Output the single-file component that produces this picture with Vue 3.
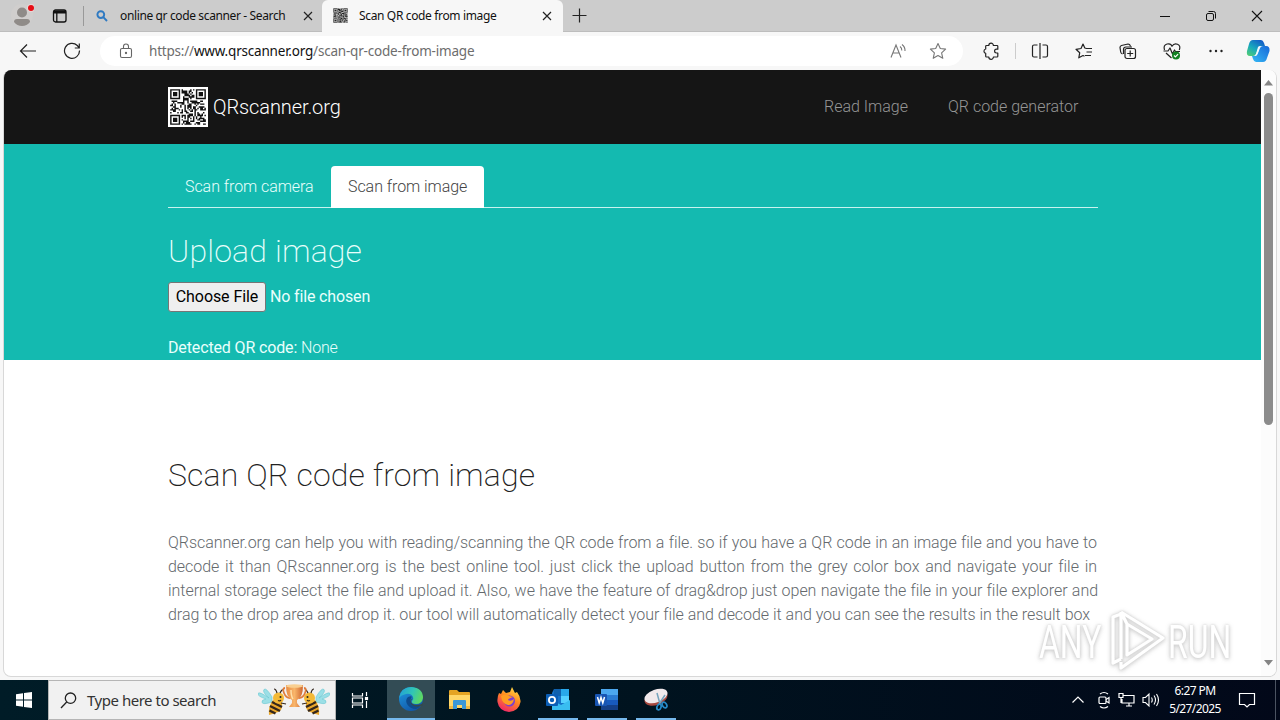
<script setup>
const N = 25
const finder = (x, y) => {
  const d = Math.max(Math.abs(x - 3), Math.abs(y - 3))
  return d === 3 || d <= 1
}
const cells = []
let seed = 91
for (let y = 0; y < N; y++) {
  for (let x = 0; x < N; x++) {
    seed = (seed * 1103515245 + 12345) % 2147483648
    let on = ((seed >> 12) & 7) > 3
    if (x < 8 && y < 8) on = x < 7 && y < 7 && finder(x, y)
    else if (x > 16 && y < 8) on = x > 17 && y < 7 && finder(x - 18, y)
    else if (x < 8 && y > 16) on = x < 7 && y > 17 && finder(x, y - 18)
    if (on) cells.push(`M${x} ${y}h1v1h-1z`)
  }
}
const qrPath = cells.join('')

const lines = [
  'QRscanner.org can help you with reading/scanning the QR code from a file. so if you have a QR code in an image file and you have to',
  'decode it than QRscanner.org is the best online tool. just click the upload button from the grey color box and navigate your file in',
  'internal storage select the file and upload it. Also, we have the feature of drag&drop just open navigate the file in your file explorer and',
  'drag to the drop area and drop it. our tool will automatically detect your file and decode it and you can see the results in the result box'
]
</script>

<template>
  <div class="screen">
    <header class="tabbar">
      <svg class="avatar" width="24" height="28" viewBox="0 0 24 28">
        <circle cx="12" cy="15" r="11" fill="#d0cecd" />
        <circle cx="12" cy="12.500" r="5" fill="#8f8b88" />
        <path d="M4 22q0-3 3-3h10q3 0 3 3-3 4-8 4t-8-4z" fill="#8f8b88" />
        <circle cx="21" cy="8" r="4" fill="#e8d8d6" />
        <circle cx="21" cy="8" r="3" fill="#e60d15" />
      </svg>
      <svg class="workspaces" width="16" height="16" viewBox="0 0 16 16" fill="none" stroke="#111" stroke-width="1.300">
        <rect x="1.500" y="2" width="12.500" height="12" rx="2" />
        <path d="M1.500 4h12.500" stroke-width="3" />
        <path d="M4.800 5v9" />
      </svg>
      <i class="sep"></i>
      <div class="tab idle">
        <svg width="12" height="12" viewBox="0 0 12 12" fill="none" stroke="#2f7ac2" stroke-width="1.900">
          <circle cx="4.800" cy="4.600" r="3.400" />
          <path d="M7.300 7.200L11 11" />
        </svg>
        <span class="tab-text t1">online qr code scanner - Search</span>
        <svg class="x" width="10" height="10" viewBox="0 0 10 10" stroke="#222" stroke-width="1.200"><path d="M1 1l8 8M9 1L1 9" /></svg>
      </div>
      <div class="tab active">
        <svg width="15" height="15" viewBox="-1 -1 27 27"><rect x="-1" y="-1" width="27" height="27" fill="#bbb" /><path :d="qrPath" fill="#222" /></svg>
        <span class="tab-text t2">Scan QR code from image</span>
        <svg class="x" width="10" height="10" viewBox="0 0 10 10" stroke="#222" stroke-width="1.200"><path d="M1 1l8 8M9 1L1 9" /></svg>
      </div>
      <svg class="plus" width="15" height="15" viewBox="0 0 15 15" stroke="#222" stroke-width="1.200"><path d="M7.500 .5v14M.5 7.500h14" /></svg>
      <div class="win">
        <svg width="12" height="12" viewBox="0 0 12 12" stroke="#111"><path d="M1 6.500h10" /></svg>
        <svg width="12" height="12" viewBox="0 0 12 12" stroke="#111" fill="none"><rect x="1.500" y="3.500" width="7" height="7" rx="1.500" /><path d="M3.500 1.500h5q2 0 2 2v5" /></svg>
        <svg width="12" height="12" viewBox="0 0 12 12" stroke="#111" stroke-width="1.100"><path d="M1 1l10 10M11 1L1 11" /></svg>
      </div>
    </header>

    <div class="toolbar">
      <svg class="back" width="18" height="16" viewBox="0 0 18 16" fill="none" stroke="#222" stroke-width="1.200"><path d="M17 8H1.500M8 1.500L1.500 8 8 14.500" /></svg>
      <svg class="reload" width="18" height="18" viewBox="0 0 18 18" fill="none" stroke="#222" stroke-width="1.200"><path d="M16.500 8.500A7.500 7.500 0 1 1 14.300 3.500L16 5.500M16.300 1.500v4.500h-4.500" /></svg>
      <div class="address">
        <svg class="lock" width="14" height="16" viewBox="0 0 14 16" fill="none" stroke="#666" stroke-width="1.100"><rect x="1.500" y="5.500" width="11" height="9" rx="1.500" /><path d="M4.500 5.500V3.500a2.500 2.500 0 0 1 5 0v2" /><circle cx="7" cy="10" r=".6" fill="#666" /></svg>
        <span class="url">https://<b>www.qrscanner.org</b>/scan-qr-code-from-image</span>
        <svg class="read" width="17" height="16" viewBox="0 0 17 16" fill="none" stroke="#777" stroke-width="1.100"><path d="M1 14.500L6 2l5 12.500M3 10h6.200M10 3.500q2 1.500 1.800 4M12 1.500q3.300 2.500 3 6.500" /></svg>
        <svg class="star" width="18" height="18" viewBox="0 0 18 18" fill="none" stroke="#777" stroke-width="1.100" stroke-linejoin="round"><path d="M9 1.500l2.300 5 5.300.6-4 3.700 1.200 5.500L9 13.500l-4.800 2.800 1.200-5.500-4-3.700 5.300-.6z" /></svg>
      </div>
      <div class="tools">
        <svg width="18" height="18" viewBox="0 0 18 18" fill="none" stroke="#222" stroke-width="1.200" stroke-linejoin="round"><path d="M4.500 3.500h2.300a2.300 2.300 0 0 1 4.600 0H15q.8 0 .8.800v2.900h-1.300a1.900 1.900 0 0 0 0 3.800h1.300v3.200q0 .8-.8.800h-3.600a2.300 2.300 0 0 1-4.600 0H4.500q-.8 0-.8-.8v-2.900a2.200 2.200 0 0 1 0-4.300V4.300q0-.8.800-.8z" /></svg>
        <i class="tool-sep"></i>
        <svg width="18" height="18" viewBox="0 0 18 18" fill="none" stroke="#222" stroke-width="1.200"><path d="M6.500 3H3Q1.500 3 1.500 4.500v9Q1.500 15 3 15h3.500M11.500 3H15q1.500 0 1.500 1.500v9Q16.500 15 15 15h-3.500M9 1v16" /></svg>
        <svg width="18" height="18" viewBox="0 0 18 18" fill="none" stroke="#222" stroke-width="1.200" stroke-linejoin="round"><path d="M11.500 6.500L9.800 6 8 2 6 6.500l-5 .8 3.700 3.500-.9 5L8 13.500l1.500.8M10.500 6.500H17M11.500 10H17M10 13.500h6" /></svg>
        <svg width="18" height="18" viewBox="0 0 18 18" fill="none" stroke="#222" stroke-width="1.200"><path d="M3.500 12Q2 11.500 1.700 10L1 5.500Q1 4 2.500 3.500L9 2q2 0 2.500 2.500" /><path d="M4.500 12V7.500q0-2.500 2.500-2.500h6" /><rect x="6" y="6.500" width="10.500" height="10" rx="2" /><path d="M11.200 8.500v6M8.200 11.500h6" /></svg>
        <svg width="18" height="18" viewBox="0 0 18 18" fill="none" stroke="#222" stroke-width="1.200" stroke-linejoin="round"><path d="M1.500 8Q0 3 4 2t5 2.300Q11 1 14.500 2.300T16.300 8M3 11l5.500 5M.5 9H5l2-3 2.500 6 2-4 1 1.500h4.500" /><circle cx="13" cy="13.500" r="4" fill="#118222" stroke="none" /><path d="M11 13.500l1.400 1.400 2.700-2.800" stroke="#fff" /></svg>
        <svg width="18" height="18" viewBox="0 0 18 18" fill="#222"><circle cx="3.500" cy="9" r="1.200" /><circle cx="9" cy="9" r="1.200" /><circle cx="14.500" cy="9" r="1.200" /></svg>
      </div>
      <svg class="copilot" width="24" height="24" viewBox="0 0 24 24">
        <defs>
          <linearGradient id="cpA" x1="0" y1="1" x2=".7" y2="0"><stop offset="0" stop-color="#58d16d" /><stop offset=".5" stop-color="#18a9bd" /><stop offset="1" stop-color="#145fc7" /></linearGradient>
          <linearGradient id="cpB" x1="0" y1="1" x2="1" y2="0"><stop offset="0" stop-color="#36b9f5" /><stop offset="1" stop-color="#1668d8" /></linearGradient>
        </defs>
        <path d="M7 1h8q2 0 3 3l1 3h-4q-2 0-3 3l-2 5q-1 2-3 2H4q-4 0-3-5L3 5q1-4 4-4z" fill="url(#cpA)" />
        <path d="M17 7h3q4 0 3.500 5L21 19q-1 4-4 4h-7q-2 0-3-3l-1-3h3q2 0 3-3l2-5q1-2 3-2z" fill="url(#cpB)" />
        <path d="M12 8q1-1.500 3.500-1-1.500 0-2 2l-2 6q-1 2.500-3 2 1-.5 1.500-2z" fill="#f2fbff" />
      </svg>
    </div>

    <div class="viewport">
      <main class="page">
        <nav class="nav">
          <div class="container navrow">
            <svg class="qr" width="40" height="40" viewBox="-1.500 -1.500 28 28"><rect x="-1.500" y="-1.500" width="28" height="28" fill="#fff" /><path :d="qrPath" fill="#111" /></svg>
            <span class="brand">QRscanner.org</span>
            <span class="link">Read Image</span>
            <span class="link">QR code generator</span>
          </div>
        </nav>
        <section class="hero">
          <div class="container">
            <div class="pills">
              <span class="pill">Scan from camera</span>
              <span class="pill on">Scan from image</span>
            </div>
            <h2 class="h-up">Upload image</h2>
            <div class="file"><button>Choose File</button><span class="nofile">No file chosen</span></div>
            <p class="detected"><b>Detected QR code:</b> <span>None</span></p>
          </div>
        </section>
        <section class="container article">
          <h2>Scan QR code from image</h2>
          <div class="para"><div v-for="(l, i) in lines" :key="i" :class="['line', 'n' + i]">{{ l }}</div></div>
        </section>
      </main>
      <div class="scroll">
        <svg width="9" height="6" viewBox="0 0 9 6"><path d="M4.500 0L9 5.500H0z" fill="#858585" /></svg>
        <i class="thumb"></i>
        <svg class="down" width="9" height="6" viewBox="0 0 9 6"><path d="M4.500 5.500L9 0H0z" fill="#858585" /></svg>
      </div>
      <div class="mark">
        <span class="any">ANY</span>
        <svg width="58" height="66" viewBox="0 0 58 66" fill="none" stroke="#fff" stroke-width="3.200" stroke-linejoin="round"><path d="M13 52L5 56V10l8-3M13 5l42 26-42 30v-6M13 5v47M19 17v31l25-16zM13 5l6 12" /></svg>
        <span class="run">RUN</span>
      </div>
    </div>

    <footer class="taskbar">
      <div class="start"><svg width="16" height="16" viewBox="0 0 16 16" fill="#fff"><path d="M0 2.200L7 1.200v6.300H0zM8 1l8-1v7.500H8zM0 8.500h7v6.300l-7-1zM8 8.500h8V16l-8-1z" /></svg></div>
      <div class="search">
        <svg class="glass" width="17" height="17" viewBox="0 0 17 17" fill="none" stroke="#222" stroke-width="1.300"><circle cx="10.500" cy="6.200" r="5.200" /><path d="M6.700 10L1 16" /></svg>
        <span class="ph">Type here to search</span>
        <svg class="bees" width="72" height="32" viewBox="0 0 72 32">
          <defs>
            <linearGradient id="cup" x1="0" x2="1"><stop offset="0" stop-color="#e98b42" /><stop offset=".5" stop-color="#f8b56a" /><stop offset="1" stop-color="#cf6630" /></linearGradient>
            <g id="bee">
              <path d="M14 13Q8 3 6 5.500T11 14Q1 7 0 9.500T8 15q-5 1-4 3.500T14 18z" fill="#9bdfe6" stroke="#6cc7d2" stroke-width=".6" />
              <path d="M15 16l9 3q1 7-4 9-5 2-9 3-1-9 4-15z" fill="#e9a72c" />
              <path d="M14 18l10 5M12 22l10 5M11.500 26.500l6 3" stroke="#33261c" stroke-width="2.400" />
              <circle cx="20.500" cy="14" r="5.500" fill="#f4b936" />
              <circle cx="22.500" cy="13" r="1" fill="#222" />
              <path d="M19 9q-1-4-3-4M22 9q2-4 3-3M23 19l5 1M20 16.500q2 1 3-.5" stroke="#33261c" stroke-width="1.200" fill="none" />
            </g>
          </defs>
          <use href="#bee" />
          <use href="#bee" transform="translate(72 0) scale(-1 1)" />
          <path d="M27 4q-3 0-1 5t6 5M46 4q3 0 1 5t-6 5" fill="none" stroke="#df7d3d" stroke-width="1.800" />
          <path d="M28 1h17q0 13-6 15v3l3 4H31l3-4v-3Q28 14 28 1z" fill="url(#cup)" />
          <ellipse cx="36.500" cy="2" rx="8.500" ry="1.700" fill="#f9cf90" />
          <path d="M33 6q0 6 2 9" stroke="#ffdfa8" stroke-width="1.500" fill="none" />
        </svg>
      </div>
      <div class="task"><svg width="18" height="18" viewBox="0 0 18 18" fill="none" stroke="#fff" stroke-width="1.200"><path d="M1.500 2v3h10V2M1.500 17v-3h10v3M1.500 7h10v5h-10zM15.500 1v4M15.500 10v7" /><rect x="14.500" y="6.500" width="2" height="2" fill="#fff" /></svg></div>
      <div class="task cur">
        <svg width="26" height="26" viewBox="0 0 26 26">
          <defs>
            <linearGradient id="eg" x1="0" x2="1" y1=".2" y2=".5"><stop offset="0" stop-color="#229fd9" /><stop offset=".55" stop-color="#31c5b5" /><stop offset="1" stop-color="#5fd860" /></linearGradient>
            <linearGradient id="eb" x1="0" x2=".6" y2="1"><stop offset="0" stop-color="#1f9ce4" /><stop offset="1" stop-color="#1257a8" /></linearGradient>
          </defs>
          <circle cx="13" cy="13" r="12" fill="url(#eb)" />
          <path d="M1 12Q3 1 13.500 1 25 2 25 12q-1 6-7 6-5 0-4-3 2-2 1-4-2-4-7-3-5 1-7 4z" fill="url(#eg)" />
          <path d="M10 11q-3 3-1 7 3 5 9 5 3-1 5-4-5 2-9-1-3-3-.5-6.500 1-2-3.500-.5z" fill="#0e4b8d" />
          <path d="M14.500 12.500q-2 2-1.500 3.500 1 2.500 5 3 4 .3 7-2v3h-3q-4 1.500-8-1-3-3-1-5.500z" fill="#35494c" />
        </svg>
      </div>
      <div class="task"><svg width="24" height="22" viewBox="0 0 24 22"><path d="M1 2q0-1 1-1h7l2 2h10q1 0 1 1v5H1z" fill="#e4a424" /><path d="M1 6h21v13H1z" fill="#ffd768" /><path d="M5 20v-8q0-1 1-1h11q1 0 1 1v8h-4v-4H9v4z" fill="#3b98d6" /><path d="M1 17h4v3H1zM18 17h4v3h-4z" fill="#efb944" /></svg></div>
      <div class="task"><svg width="26" height="26" viewBox="0 0 26 26">
        <defs><linearGradient id="fx" x1=".8" y1="0" x2=".3" y2="1"><stop offset="0" stop-color="#ffe14a" /><stop offset=".45" stop-color="#ff8b20" /><stop offset="1" stop-color="#f0246a" /></linearGradient></defs>
        <path d="M3 6l2 1 2-4 3 3 4-1 2-5 3 6 2-1q4 5 3.500 10Q23 24 13 25 3 24 1.500 15 1 10 3 6z" fill="url(#fx)" />
        <circle cx="13.500" cy="14" r="5.500" fill="#7b3fd0" />
        <path d="M5 9q4-3 8 0l4 1q-4 1-5 3 3 2 6-1-1 6-6 6-6-1-7-9z" fill="#ff9d22" />
      </svg></div>
      <div class="task run-app"><svg width="26" height="24" viewBox="0 0 26 24"><path d="M9 1h14v21H7V5z" fill="#1572c8" /><path d="M9 1h7v7H9z" fill="#1061ad" /><path d="M16 1h8v7h-8z" fill="#29a8ea" /><path d="M16 8h8v7h-8z" fill="#54d0ff" /><path d="M7 12l9 5 9-5v10H7z" fill="#39bdf0" /><rect x="1" y="6" width="12" height="12" rx="1" fill="#0b5eb5" /><circle cx="7" cy="12" r="3.100" fill="none" stroke="#fff" stroke-width="1.800" /></svg></div>
      <div class="task run-app"><svg width="26" height="24" viewBox="0 0 26 24"><path d="M7 1h17v21H7z" fill="#2b7cd3" /><path d="M7 1h17v6H7z" fill="#4ca8ef" /><path d="M7 12h17v5H7z" fill="#185abd" /><path d="M7 17h17v5H7z" fill="#143f87" /><rect x="1" y="6" width="12" height="12" rx="1" fill="#1855b3" /><path d="M3.500 9l1.700 6L7 9.500 8.800 15l1.700-6" fill="none" stroke="#fff" stroke-width="1.500" /></svg></div>
      <div class="task run-app"><svg width="26" height="26" viewBox="0 0 26 26"><ellipse cx="13" cy="11" rx="12" ry="7" fill="#a7483f" transform="rotate(-20 13 11)" /><ellipse cx="13" cy="9" rx="12" ry="6.500" fill="#f1e9ec" transform="rotate(-20 13 9)" /><path d="M14 6l3 11M22 8l-6 9" stroke="#75a3bd" stroke-width="1.500" /><g fill="none" stroke="#2689c7" stroke-width="1.700"><ellipse cx="16" cy="20" rx="2" ry="3" transform="rotate(20 16 20)" /><ellipse cx="21.500" cy="18" rx="2" ry="3" transform="rotate(-35 21.500 18)" /></g></svg></div>
      <div class="tray">
        <svg width="14" height="14" viewBox="0 0 14 14" fill="none" stroke="#fff" stroke-width="1.200"><path d="M1.500 9.500L7 4l5.500 5.500" /></svg>
        <svg class="meet" width="14" height="18" viewBox="0 0 14 18" fill="none" stroke="#fff" stroke-width="1.200"><rect x="2" y="6" width="7" height="6.500" rx="1" /><path d="M9 8.500l3-2v5.500l-3-2M3 3q4-3 8 0M3 15.500q4 3 8 0" /></svg>
        <svg class="net" width="17" height="16" viewBox="0 0 17 16" fill="none" stroke="#fff" stroke-width="1.200"><path d="M5 3.500h11v7.500H4V7M8 14h6M11 11v3M1 1.500h4v4H1zM3 6v5" /></svg>
        <svg class="vol" width="18" height="16" viewBox="0 0 18 16" fill="none" stroke="#fff" stroke-width="1.100"><path d="M1 5.500h2.500L7 2v12l-3.500-3.500H1zM9.500 5.500q1.500 2.500 0 5M12 3.500q3 4.500 0 9M14.500 2q4 6 0 12" /></svg>
        <div class="clock"><span>6:27 PM</span><span>5/27/2025</span></div>
        <svg class="note" width="18" height="18" viewBox="0 0 18 18" fill="none" stroke="#fff" stroke-width="1.200"><path d="M1.500 2.500h15v11h-5L9 16l-2.500-2.500h-5z" /></svg>
        <i class="peek"></i>
      </div>
    </footer>
  </div>
</template>

<style>
html, body { margin: 0; overflow: hidden; }
</style>

<style scoped>
* { box-sizing: border-box; }
svg { display: block; flex: none; }
.screen { width: 1280px; height: 720px; display: flex; flex-direction: column; background: #f7f7f7; overflow: hidden; font-family: "Noto Sans", sans-serif; color: #111; }
.tabbar { height: 32px; flex: none; display: flex; align-items: center; background: #ccc; border-bottom: 1px solid #bdbdbd; }
.avatar { margin: -3px 0 0 10px; }
.workspaces { margin-left: 18px; }
.sep { width: 1px; height: 20px; background: #999; margin-left: 15px; }
.tab { height: 32px; display: flex; align-items: center; font-size: 12px; }
.idle { width: 238px; padding: 0 9px 0 12px; }
.active { width: 241px; background: #f7f7f7; border-radius: 6px 6px 0 0; padding: 0 11px; }
.tab-text { white-space: nowrap; }
.t1 { margin-left: 12px; letter-spacing: -.37px; }
.t2 { margin-left: 11px; letter-spacing: -.35px; }
.x { margin-left: auto; }
.plus { margin-left: 9px; }
.win { margin-left: auto; display: flex; gap: 34px; padding-right: 17px; }
.toolbar { height: 38px; flex: none; display: flex; align-items: center; background: #f7f7f7; }
.back { margin-left: 19px; }
.reload { margin-left: 26px; }
.address { width: 863px; height: 30px; margin-left: 19px; border-radius: 15px; background: #fff; display: flex; align-items: center; }
.lock { margin-left: 19px; }
.url { margin-left: 16px; font-size: 13.500px; color: #6d6d6d; white-space: nowrap; letter-spacing: -.2px; }
.url b { color: #111; font-weight: 400; }
.read { margin-left: auto; }
.star { margin: 0 16px 0 22px; }
.tools { display: flex; align-items: center; margin-left: 19px; }
.tools svg { margin-right: 26px; }
.tools svg:first-child { margin-right: 15px; }
.tool-sep { width: 1px; height: 16px; background: #ccc; margin-right: 15px; }
.copilot { margin-left: -5px; }
.viewport { position: relative; height: 607px; margin: 0 3px 3px; flex: none; display: flex; background: #fff; border: 1px solid #d8d8d8; border-top: 0; border-radius: 8px; overflow: hidden; }
.page { width: 1257px; font-family: Roboto, sans-serif; font-weight: 300; font-size: 16px; }
.container { width: 930px; margin-left: 164px; }
.nav { height: 74px; background: #151515; color: #fff; }
.navrow { display: flex; align-items: center; height: 74px; }
.brand { font-size: 20px; margin-left: 5px; font-weight: 300; width: 611px; white-space: nowrap; letter-spacing: -.1px; padding-bottom: 1px; }
.link { color: #969696; white-space: nowrap; font-weight: 300; width: 124px; padding-bottom: 2px; }
.hero { height: 216px; background: #14bab0; color: #e9fffc; padding-top: 22px; }
.pills { height: 42px; display: flex; border-bottom: 1px solid #c9f3ef; }
.pill { padding: 0 17px; height: 41px; line-height: 41px; white-space: nowrap; width: 163px; letter-spacing: -.06px; }
.on { width: 153px; height: 42px; background: #fff; color: #444; border-radius: 4px 4px 0 0; }
h2 { margin: 0; font-size: 32px; line-height: 38px; font-weight: 200; white-space: nowrap; letter-spacing: .13px; }
.hero h2 { margin-top: 24px; letter-spacing: .17px; }
.file { display: flex; align-items: center; margin-top: 12px; height: 30px; font-weight: 400; }
button { width: 98px; height: 30px; padding: 0 0 2px; background: #efefef; color: #000; border: 1px solid #767676; border-radius: 3px; font: 400 16px Roboto, sans-serif; letter-spacing: -.08px; white-space: nowrap; }
.nofile { margin-left: 4px; white-space: nowrap; letter-spacing: -.15px; padding-bottom: 2px; }
.detected { margin: 24px 0 0; line-height: 24px; white-space: nowrap; letter-spacing: -.14px; }
.detected b { font-weight: 400; }
.article { padding-top: 96px; }
.article h2 { color: #222; }
.para { margin-top: 37px; color: #64696d; }
.line { height: 24px; line-height: 24px; white-space: nowrap; text-align: justify; text-align-last: justify; letter-spacing: -.04px; }
.n0, .n1 { width: 929px; }
.n3 { width: 922px; }
.scroll { width: 15px; display: flex; flex-direction: column; align-items: center; padding: 10px 0; background: #fcfcfc; }
.thumb { width: 9px; height: 332px; margin-top: 7px; border-radius: 5px; background: #8b8b8b; }
.down { margin-top: auto; }
.mark { position: absolute; left: 1035px; top: 537px; display: flex; align-items: center; height: 66px; color: #fff; opacity: .8; font: 400 47px/50px "Roboto", sans-serif; filter: drop-shadow(0 0 1px #ccc) drop-shadow(0 1px 2px #bbb); }
.any, .run { display: block; transform-origin: left center; transform: scaleX(.68); width: 66px; white-space: nowrap; padding-top: 3px; }
.mark svg { margin: 0 2px 0 3px; }
.taskbar { height: 40px; flex: none; display: flex; background: linear-gradient(90deg, #001c27, #00131f 50%, #020819); color: #fff; }
.start { width: 48px; display: flex; align-items: center; justify-content: center; }
.search { width: 288px; display: flex; align-items: center; background: #f1f1f1; color: #333; border: 1px solid #b5b5b5; }
.glass { margin-left: 11px; }
.ph { font-size: 15px; margin-left: 10px; white-space: nowrap; letter-spacing: -.48px; width: 132px; }
.bees { margin-left: 39px; }
.task { width: 49px; height: 40px; display: flex; align-items: center; justify-content: center; }
.task:nth-child(3) { width: 51px; padding-right: 4px; }
.cur { width: 48px; background: #334c55; border-bottom: 2px solid #76b9ed; }
.run-app { background: linear-gradient(#76b9ed, #76b9ed) center bottom / 40px 2px no-repeat; }
.tray { margin-left: auto; display: flex; align-items: center; }
.tray > svg:first-child { margin-right: 1px; }
.meet { margin-left: 11px; }
.net { margin-left: 7px; }
.vol { margin-left: 7px; }
.clock { width: 58px; margin-left: 6px; display: flex; flex-direction: column; align-items: center; font-size: 12px; line-height: 18px; letter-spacing: -.6px; white-space: nowrap; }
.note { margin: 0 19px 0 14px; }
.peek { width: 1px; height: 40px; margin-right: 4px; background: #4b5361; }
</style>
